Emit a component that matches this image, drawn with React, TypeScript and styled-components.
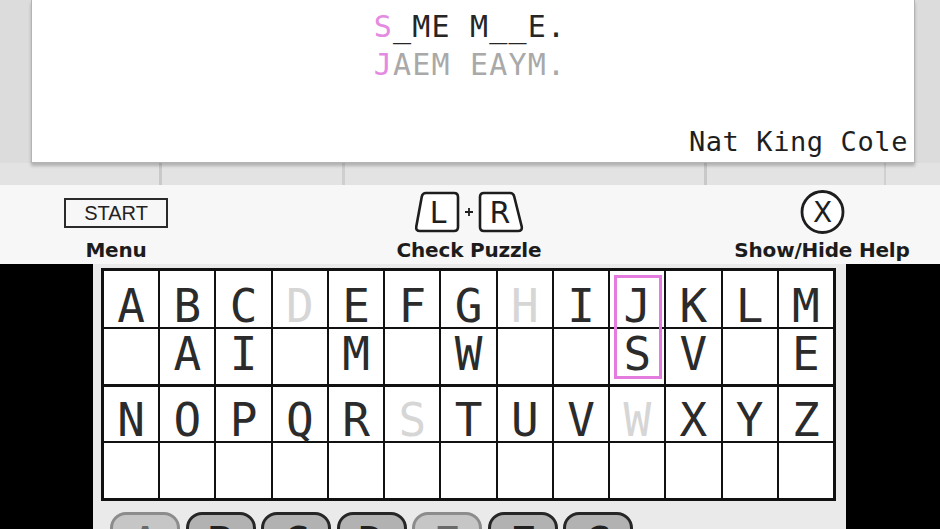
import React from 'react'
import styled, { createGlobalStyle } from 'styled-components'

const GlobalStyle = createGlobalStyle`
  html, body {
    margin: 0;
    padding: 0;
    background: #000;
  }
  body {
    width: 940px;
    height: 529px;
    overflow: hidden;
    font-family: 'DejaVu Sans', 'Liberation Sans', sans-serif;
  }
`

const Screen = styled.div`
  width: 940px;
  height: 529px;
  display: flex;
  flex-direction: column;
  overflow: hidden;
`

const TopScreen = styled.div`
  height: 264px;
  display: flex;
  flex-direction: column;
  flex-shrink: 0;
`

const PaperRow = styled.div`
  height: 163px;
  display: flex;
  background-color: #dcdcdc;
`

const Paper = styled.div`
  margin-left: 31px;
  width: 884px;
  height: 163px;
  box-sizing: border-box;
  background: #fff;
  border: 1px solid #b4b4b4;
  border-top: none;
  box-shadow: 0 3px 3px rgba(0, 0, 0, 0.22);
  display: flex;
  flex-direction: column;
  justify-content: space-between;
  padding: 8px 6px 5px 0;
  position: relative;
  z-index: 1;
`

const Phrase = styled.div`
  font-family: 'DejaVu Sans Mono', 'Liberation Mono', monospace;
  font-size: 30px;
  line-height: 38px;
  letter-spacing: 1.2px;
  text-align: center;
`

const PhraseLine = styled.div<{ $tone: 'solved' | 'cipher' }>`
  color: ${(p) => (p.$tone === 'solved' ? '#262626' : '#a9a9a9')};
  white-space: pre;
`

const Pink = styled.span`
  color: #e58ae2;
`

const Author = styled.div`
  font-family: 'DejaVu Sans Mono', 'Liberation Mono', monospace;
  font-size: 27px;
  line-height: 30px;
  letter-spacing: 0.6px;
  color: #1e1e1e;
  text-align: right;
`

const Strip = styled.div`
  height: 22px;
  background-color: #e3e3e3;
  background-image: linear-gradient(
    90deg,
    transparent 159px,
    #c9c9c9 159px,
    #c9c9c9 162px,
    transparent 162px,
    transparent 342px,
    #cfcfcf 342px,
    #cfcfcf 345px,
    transparent 345px,
    transparent 704px,
    #c9c9c9 704px,
    #c9c9c9 707px,
    transparent 707px,
    transparent 884px,
    #d0d0d0 884px,
    #d0d0d0 886px,
    transparent 886px
  );
`

const ControlBar = styled.div`
  height: 79px;
  box-sizing: border-box;
  background: #f7f7f7;
  display: grid;
  grid-template-columns: repeat(3, 200px);
  column-gap: 153px;
  padding: 4px 0 0 16px;
`

const Control = styled.div`
  display: flex;
  flex-direction: column;
  align-items: center;
`

const IconSlot = styled.div`
  height: 46px;
  display: flex;
  align-items: center;
  justify-content: center;
`

const Label = styled.div`
  margin-top: 3px;
  font-family: 'DejaVu Sans', sans-serif;
  font-weight: bold;
  font-size: 20px;
  line-height: 24px;
  letter-spacing: -0.2px;
  color: #1c1c1c;
  white-space: nowrap;
`

const StartBox = styled.div`
  width: 104px;
  height: 30px;
  margin-top: 2px;
  box-sizing: border-box;
  border: 2px solid #2a2a2a;
  display: flex;
  align-items: center;
  justify-content: center;
  font-family: 'Liberation Sans', Arial, sans-serif;
  font-size: 20px;
  line-height: 1;
  color: #222;
`

const BottomScreen = styled.div`
  height: 265px;
  display: flex;
  flex-shrink: 0;
`

const SideBar = styled.div<{ $w: number }>`
  width: ${(p) => p.$w}px;
  flex-shrink: 0;
  background: #000;
`

const Field = styled.div`
  flex: 1;
  background: #eaeaea;
  display: flex;
  flex-direction: column;
  padding: 4px 0 0 8px;
  overflow: hidden;
`

const Board = styled.div`
  width: 735px;
  box-sizing: border-box;
  border: 3px solid #111;
  background: #111;
  display: flex;
  flex-direction: column;
  gap: 3px;
`

const Block = styled.div`
  display: flex;
  gap: 2px;
  background: #111;
`

const Column = styled.div<{ $selected?: boolean }>`
  flex: 1;
  display: flex;
  flex-direction: column;
  gap: 2px;
  position: relative;
  &::after {
    content: '';
    display: ${(p) => (p.$selected ? 'block' : 'none')};
    position: absolute;
    top: 4px;
    bottom: 5px;
    left: 4px;
    right: 2px;
    border: 3px solid #e47ce0;
  }
`

const Cell = styled.div<{ $h: number; $pt: number; $faded?: boolean }>`
  height: ${(p) => p.$h}px;
  box-sizing: border-box;
  padding-top: ${(p) => p.$pt}px;
  background: #fff;
  display: flex;
  justify-content: center;
  font-family: 'DejaVu Sans Mono', 'Liberation Mono', monospace;
  font-size: 46px;
  line-height: 40px;
  color: ${(p) => (p.$faded ? '#d6d6d6' : '#2b2b2b')};
`

const ButtonRow = styled.div`
  display: flex;
  gap: 5.5px;
  margin-top: 11px;
  padding-left: 9px;
`

const LetterButton = styled.div<{ $dim?: boolean }>`
  width: 70px;
  height: 60px;
  flex-shrink: 0;
  box-sizing: border-box;
  border-radius: 16px;
  border: 3px solid ${(p) => (p.$dim ? '#8c8c8c' : '#262626')};
  background: ${(p) => (p.$dim ? '#c6c6c6' : '#b2b2b2')};
  padding-top: 9px;
  text-align: center;
  font-family: 'DejaVu Sans Mono', 'Liberation Mono', monospace;
  font-size: 46px;
  line-height: 40px;
  color: ${(p) => (p.$dim ? '#6a6a6a' : '#222')};
`

const ShoulderKeys = () => (
  <svg width="110" height="42" viewBox="0 0 110 42">
    <path
      d="M12 2 H40 Q44 2 44 6 V36 Q44 40 40 40 H6 Q1.5 40 2.3 35.5 L7.8 5.5 Q8.6 2 12 2 Z"
      fill="#fff"
      stroke="#1e1e1e"
      strokeWidth="2.6"
    />
    <text x="24" y="32" textAnchor="middle" fontFamily="DejaVu Sans, sans-serif" fontSize="30" fill="#1e1e1e">
      L
    </text>
    <path d="M51 21 H59 M55 17 V25" stroke="#1e1e1e" strokeWidth="1.8" />
    <path
      d="M70 2 H96 Q99.4 2 100.2 5.5 L107.7 35.5 Q108.5 40 104 40 H70 Q66 40 66 36 V6 Q66 2 70 2 Z"
      fill="#fff"
      stroke="#1e1e1e"
      strokeWidth="2.6"
    />
    <text x="86" y="32" textAnchor="middle" fontFamily="DejaVu Sans, sans-serif" fontSize="30" fill="#1e1e1e">
      R
    </text>
  </svg>
)

const XButton = () => (
  <svg width="46" height="46" viewBox="0 0 46 46">
    <circle cx="23.5" cy="23" r="20.5" fill="#fff" stroke="#1e1e1e" strokeWidth="2.8" />
    <text x="23.5" y="33" textAnchor="middle" fontFamily="DejaVu Sans, sans-serif" fontSize="28" fill="#1e1e1e">
      X
    </text>
  </svg>
)

const upperLetters = 'ABCDEFGHIJKLM'.split('')
const lowerLetters = 'NOPQRSTUVWXYZ'.split('')
const guesses: Record<string, string> = { B: 'A', C: 'I', E: 'M', G: 'W', J: 'S', K: 'V', M: 'E' }
const used = new Set(['D', 'H', 'S', 'W'])
const selected = 'J'
const buttons = ['A', 'B', 'C', 'D', 'E', 'F', 'G']
const dimButtons = new Set(['A', 'E'])

export default function App() {
  return (
    <>
      <GlobalStyle />
      <Screen>
        <TopScreen>
          <PaperRow>
            <Paper>
              <Phrase>
                <PhraseLine $tone="solved">
                  <Pink>S</Pink>_ME M__E.
                </PhraseLine>
                <PhraseLine $tone="cipher">
                  <Pink>J</Pink>AEM EAYM.
                </PhraseLine>
              </Phrase>
              <Author>Nat King Cole</Author>
            </Paper>
          </PaperRow>
          <Strip />
          <ControlBar>
            <Control>
              <IconSlot>
                <StartBox>START</StartBox>
              </IconSlot>
              <Label>Menu</Label>
            </Control>
            <Control>
              <IconSlot>
                <ShoulderKeys />
              </IconSlot>
              <Label>Check Puzzle</Label>
            </Control>
            <Control>
              <IconSlot>
                <XButton />
              </IconSlot>
              <Label>Show/Hide Help</Label>
            </Control>
          </ControlBar>
        </TopScreen>
        <BottomScreen>
          <SideBar $w={93} />
          <Field>
            <Board>
              <Block>
                {upperLetters.map((l) => (
                  <Column key={l} $selected={l === selected}>
                    <Cell $h={56} $pt={15} $faded={used.has(l)}>
                      {l}
                    </Cell>
                    <Cell $h={55} $pt={5}>
                      {guesses[l] ?? ''}
                    </Cell>
                  </Column>
                ))}
              </Block>
              <Block>
                {lowerLetters.map((l) => (
                  <Column key={l}>
                    <Cell $h={54} $pt={13} $faded={used.has(l)}>
                      {l}
                    </Cell>
                    <Cell $h={55} $pt={5} />
                  </Column>
                ))}
              </Block>
            </Board>
            <ButtonRow>
              {buttons.map((b) => (
                <LetterButton key={b} $dim={dimButtons.has(b)}>
                  {b}
                </LetterButton>
              ))}
            </ButtonRow>
          </Field>
          <SideBar $w={94} />
        </BottomScreen>
      </Screen>
    </>
  )
}
